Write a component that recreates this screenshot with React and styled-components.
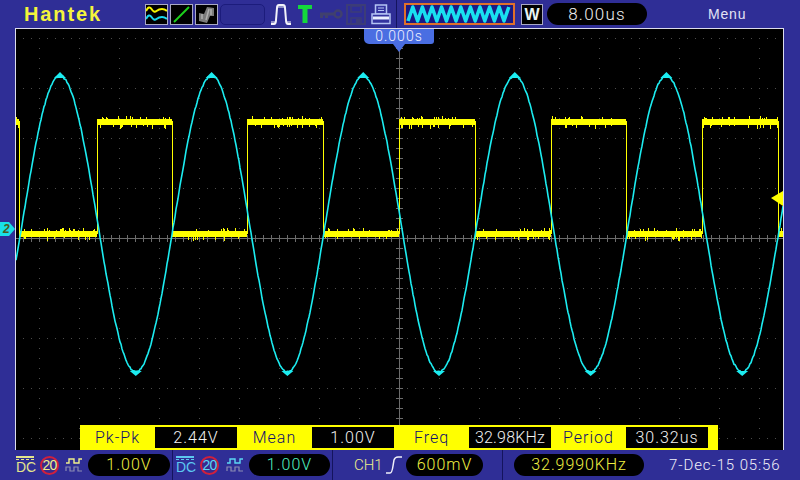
import React, { useMemo } from "react";
import styled, { createGlobalStyle } from "styled-components";

const Global = createGlobalStyle`
  html, body {
    margin: 0;
    padding: 0;
    background: #2f2e96;
    overflow: hidden;
  }
`;

const Page = styled.div`
  width: 800px;
  height: 480px;
  background: #2f2e96;
  display: flex;
  flex-direction: column;
  font-family: "Liberation Sans", Arial, sans-serif;
  position: relative;
  overflow: hidden;
`;

const TopBar = styled.div`
  height: 28px;
  display: flex;
  align-items: center;
  flex-shrink: 0;
`;

const Logo = styled.div`
  width: 121px;
  margin-left: 24px;
  color: #f4f43c;
  font-size: 20px;
  font-weight: bold;
  letter-spacing: 1.9px;
`;

const IconBox = styled.div`
  width: 23px;
  height: 21px;
  box-sizing: border-box;
  margin-right: 2px;
  background: #000;
  border: 1px solid #a9a9c4;
  display: flex;

  svg {
    display: block;
  }
`;

const EmptySlot = styled.div`
  width: 45px;
  height: 21px;
  box-sizing: border-box;
  border: 1px solid #1c1c7c;
  border-radius: 5px;
  background: #2d2d92;
  margin-right: 5px;
`;

const TopIcon = styled.svg`
  display: block;
  flex-shrink: 0;
  margin-right: ${(p) => p.$gap || 0}px;
`;

const VLine = styled.div`
  width: 1px;
  align-self: stretch;
  background: #14145e;
  margin: ${(p) => p.$margin};
`;

const WaveBox = styled.div`
  width: 111px;
  height: 22px;
  box-sizing: border-box;
  background: #1a1a84;
  border: 2px solid #e0702a;
  margin-right: 6px;

  svg {
    display: block;
  }
`;

const ModeBox = styled.div`
  width: 22px;
  height: 21px;
  box-sizing: border-box;
  background: #000;
  border: 1px solid #a9a9c4;
  color: #e8f4f4;
  font-size: 16px;
  font-weight: bold;
  line-height: 19px;
  text-align: center;
  margin-right: 4px;
`;

const Pill = styled.div`
  width: ${(p) => p.$w}px;
  height: 22px;
  margin-left: ${(p) => p.$left || 0}px;
  border-radius: 11px;
  background: #000;
  color: ${(p) => p.$color || "#f0f0f0"};
  font-family: Roboto, "Liberation Sans", sans-serif;
  font-weight: 300;
  font-size: ${(p) => p.$size || 16}px;
  letter-spacing: ${(p) => p.$track ?? 1}px;
  line-height: 22px;
  text-align: center;
  flex-shrink: 0;
`;

const MenuLabel = styled.div`
  margin-left: 61px;
  color: #e4e4f4;
  font-size: 14px;
  letter-spacing: 0.8px;
`;

const Screen = styled.div`
  position: relative;
  margin-left: 15px;
  width: 769px;
  height: 422px;
  box-sizing: border-box;
  border: 1px solid #dcdcec;
  border-bottom: 0;
  background: #000;
  flex-shrink: 0;

  > svg {
    display: block;
  }
`;

const TimeTab = styled.div`
  position: absolute;
  left: 348px;
  top: 0;
  width: 70px;
  height: 15px;
  background: #4a6ee2;
  color: #f0f0ff;
  border-radius: 0 0 3px 5px;
  font-family: Roboto, "Liberation Sans", sans-serif;
  font-weight: 300;
  font-size: 14px;
  letter-spacing: 1px;
  line-height: 15px;
  text-align: center;

  &::after {
    content: "";
    position: absolute;
    left: 29px;
    top: 15px;
    border-left: 6px solid transparent;
    border-right: 6px solid transparent;
    border-top: 8px solid #4a6ee2;
  }
`;

const MeasureBar = styled.div`
  position: absolute;
  left: 64px;
  bottom: 0;
  width: 638px;
  height: 25px;
  background: #ffff00;
  display: flex;
  align-items: center;
`;

const MeasureLabel = styled.div`
  width: 75px;
  text-align: center;
  color: #10106c;
  font-family: Roboto, "Liberation Sans", sans-serif;
  font-weight: 300;
  font-size: 16px;
  letter-spacing: 1px;
  flex-shrink: 0;
`;

const MeasureValue = styled.div`
  width: 82px;
  height: 21px;
  background: #000;
  color: #f2f2f2;
  font-family: Roboto, "Liberation Sans", sans-serif;
  font-weight: 300;
  font-size: 16px;
  letter-spacing: ${(p) => p.$track ?? 1}px;
  line-height: 21px;
  text-align: center;
  flex-shrink: 0;
`;

const ChannelMarker = styled.svg`
  position: absolute;
  left: 0;
  top: 221px;
`;

const BottomBar = styled.div`
  flex: 1;
  display: flex;
  align-items: center;
`;

const DcStack = styled.div`
  width: 18px;
  margin-left: ${(p) => p.$left}px;
  color: ${(p) => p.$color};
  font-size: 14px;
  line-height: 13px;
  text-align: center;
  flex-shrink: 0;

  &::before {
    content: "";
    display: block;
    height: 1px;
    border-top: 2px solid ${(p) => p.$color};
    border-bottom: 1px dashed ${(p) => p.$color};
    margin-bottom: 1px;
  }
`;

const LimitBadge = styled.div`
  width: 19px;
  height: 19px;
  box-sizing: border-box;
  margin-left: ${(p) => p.$left}px;
  border: 2px solid #d0203c;
  border-radius: 50%;
  background: #3a2a8c;
  color: ${(p) => p.$color};
  font-size: 14px;
  line-height: 15px;
  letter-spacing: -0.8px;
  text-align: center;
  flex-shrink: 0;
`;

const PulseSlot = styled.div`
  display: flex;
  width: 18px;
  margin-left: ${(p) => p.$left}px;
  flex-shrink: 0;
`;

const ChannelName = styled.div`
  margin-left: 21px;
  width: 32px;
  color: #f0f08c;
  font-family: Roboto, "Liberation Sans", sans-serif;
  font-weight: 300;
  font-size: 15px;
  flex-shrink: 0;
`;

const DateText = styled.div`
  margin-left: 25px;
  color: #f0f0f8;
  font-family: Roboto, "Liberation Sans", sans-serif;
  font-weight: 300;
  font-size: 15px;
  letter-spacing: 0.9px;
  white-space: nowrap;
`;

// small seeded random, so the noise stays the same on every load
const makeRandom = (seed) => {
  let s = seed;
  return () => {
    s = (s * 16807) % 2147483647;
    return (s - 1) / 2147483646;
  };
};

const X0 = 16;
const Y0 = 29;
const PERIOD = 151.6;

const buildSine = () => {
  const rand = makeRandom(77);
  const pts = [];
  for (let x = 16; x <= 783; x += 1) {
    const y = 224 - 148 * Math.cos(((x - 60) / PERIOD) * Math.PI * 2);
    pts.push(`${x},${(y + (rand() - 0.5) * 1.6).toFixed(1)}`);
  }
  return pts.join(" ");
};

// the trace gets a small blob at each crest and trough
const buildBlobs = () => {
  const out = [];
  for (let i = 0; i < 5; i += 1) {
    const crest = 60 + i * PERIOD;
    const trough = crest + PERIOD / 2;
    out.push(`M${crest - 6} 78L${crest} 72L${crest + 6} 78Z`);
    out.push(`M${trough - 6} 371L${trough} 376L${trough + 6} 371Z`);
  }
  return out.join("");
};

const EDGES = [19, 97, 172, 247, 323, 399, 475, 551, 626, 702, 778];

const buildSquareNoise = () => {
  const rand = makeRandom(1234);
  const bands = [];
  let high = true;
  let left = 16;
  [...EDGES, 783].forEach((edge) => {
    const yc = high ? 122 : 234;
    for (let x = left; x < edge; x += 1) {
      const up = rand() < 0.18 ? 4 + rand() * 2 : 3;
      const down = rand() < 0.18 ? 4 + rand() * 3 : 3;
      bands.push(`M${x + 0.5} ${Math.round(yc - up)}V${Math.round(yc + down)}`);
    }
    left = edge;
    high = !high;
  });
  return bands.join("");
};

const buildEdges = () => EDGES.map((x) => `M${x + 0.5} 121V234`).join("");

const range = (from, to, step) => {
  const out = [];
  for (let v = from; v <= to; v += step) out.push(v);
  return out;
};

const Scope = () => {
  const sine = useMemo(buildSine, []);
  const blobs = useMemo(buildBlobs, []);
  const noise = useMemo(buildSquareNoise, []);
  const edges = useMemo(buildEdges, []);
  const cols = range(39, 759, 40);
  const rows = range(38, 438, 50);
  const hDots = range(23, 775, 8);
  const vDots = range(38, 438, 10);

  return (
    <svg width="767" height="421" viewBox={`${X0} ${Y0} 767 421`}>
      <g fill="#4c4c4c">
        {rows.map((y) =>
          hDots.map((x) => <rect key={`h${y}-${x}`} x={x} y={y} width="1" height="1" />)
        )}
        {cols.map((x) =>
          vDots.map((y) => <rect key={`v${x}-${y}`} x={x} y={y} width="1" height="1" />)
        )}
      </g>
      <path d="M16 238.500H783M399.500 29V449" stroke="#6c6c6c" strokeWidth="1" />
      <path
        d={
          hDots.map((x) => `M${x + 0.5} 235V242`).join("") +
          vDots.map((y) => `M396 ${y + 0.5}H403`).join("")
        }
        stroke="#6c6c6c"
        strokeWidth="1"
      />
      <path d={edges} stroke="#ffff00" strokeWidth="1" fill="none" shapeRendering="crispEdges" />
      <path d={noise} stroke="#ffff00" strokeWidth="1" fill="none" shapeRendering="crispEdges" />
      <polyline points={sine} fill="none" stroke="#1cecf0" strokeWidth="1.600" />
      <path d={blobs} fill="#1cecf0" />
      <path d="M771 198L783 191V206Z" fill="#ffff00" />
    </svg>
  );
};

const PulseIcon = ({ color, dim }) => (
  <svg width="18" height="14" viewBox="0 0 18 14">
    <path d="M1 5H4V1H9V5H14V1H17" stroke={color} strokeWidth="1.400" fill="none" />
    <path d="M1 13V9H5V13H9V9H13V13H17" stroke={dim} strokeWidth="1.200" fill="none" />
  </svg>
);

export default function App() {
  return (
    <Page>
      <Global />
      <TopBar>
        <Logo>Hantek</Logo>
        <IconBox>
          <svg width="21" height="19" viewBox="0 0 21 19">
            <path d="M0 6Q3 0 5.500 4T10.500 6T16 4T21 6" stroke="#f4f400" strokeWidth="2" fill="none" />
            <path d="M0 14Q3 8 5.500 12T10.500 14T16 12T21 14" stroke="#19d8f0" strokeWidth="2" fill="none" />
          </svg>
        </IconBox>
        <IconBox>
          <svg width="21" height="19" viewBox="0 0 21 19">
            <path d="M3 17L18 2" stroke="#1cd01c" strokeWidth="2" />
          </svg>
        </IconBox>
        <IconBox>
          <svg width="21" height="19" viewBox="0 0 21 19">
            <path d="M3 16V8L8 9L11 2L18 3V11L14 11L11 18Z" fill="#7c7c7c" />
            <path d="M6 14V9M10 15L13 4M15 10V4" stroke="#b0b0b0" strokeWidth="1.500" />
          </svg>
        </IconBox>
        <EmptySlot />
        <TopIcon width="22" height="23" viewBox="0 0 22 23" $gap={6}>
          <path
            d="M1 21H4Q6 21 6 17L7 5Q7 2 9 2H13Q15 2 15 5L16 17Q16 21 18 21H21"
            stroke="#f2f2fa"
            strokeWidth="2"
            fill="none"
          />
          <path
            d="M2 21V18M4 21V18M8 2V5M10 2V5M12 2V5M14 2V5M18 21V18M20 21V18"
            stroke="#f2f2fa"
            strokeWidth="1"
          />
        </TopIcon>
        <TopIcon width="14" height="18" viewBox="0 0 14 18" $gap={8}>
          <path d="M0 0H14V4H9.500V18H4.500V4H0Z" fill="#14d83c" />
        </TopIcon>
        <TopIcon width="23" height="10" viewBox="0 0 23 10" $gap={3}>
          <circle cx="18" cy="5" r="3.500" fill="none" stroke="#40406e" strokeWidth="2.500" />
          <path d="M0 3.500H15V6.500H8V9H5V6.500H3V9H0Z" fill="#40406e" />
        </TopIcon>
        <TopIcon width="20" height="21" viewBox="0 0 20 21" $gap={5}>
          <path d="M1 1H19V20H1Z" fill="none" stroke="#3c3c78" strokeWidth="2" />
          <path d="M5 2H15V8H5ZM5 14H15V20H5Z" fill="none" stroke="#3c3c78" strokeWidth="1.500" />
          <rect x="10" y="15" width="4" height="4" fill="#3c3c78" />
        </TopIcon>
        <TopIcon width="20" height="21" viewBox="0 0 20 21">
          <path d="M4.500 1H15.500V10H4.500Z" fill="#3434a0" stroke="#b4c4f4" strokeWidth="1.500" />
          <path d="M7 4H13M7 6.500H13" stroke="#b4c4f4" strokeWidth="1" />
          <path d="M1 10H19V19.500H1Z" fill="#3434a0" stroke="#b4c4f4" strokeWidth="1.500" />
          <rect x="2" y="12.500" width="16" height="3" fill="#e8eeff" />
        </TopIcon>
        <VLine $margin="0 7px 0 5px" />
        <WaveBox>
          <svg width="107" height="18" viewBox="0 0 107 18">
            <path
              d={range(0, 10, 1)
                .map((i) => `${i === 0 ? "M" : "L"}${2 + i * 9.600} 16L${6.800 + i * 9.600} 2`)
                .join("")}
              stroke="#19e0f0"
              strokeWidth="3.500"
              strokeLinejoin="round"
              fill="none"
            />
          </svg>
        </WaveBox>
        <ModeBox>W</ModeBox>
        <Pill $w={100} $size={17} $track={1.2}>8.00us</Pill>
        <MenuLabel>Menu</MenuLabel>
      </TopBar>
      <Screen>
        <Scope />
        <TimeTab>0.000s</TimeTab>
        <MeasureBar>
          <MeasureLabel>Pk-Pk</MeasureLabel>
          <MeasureValue>2.44V</MeasureValue>
          <MeasureLabel>Mean</MeasureLabel>
          <MeasureValue>1.00V</MeasureValue>
          <MeasureLabel>Freq</MeasureLabel>
          <MeasureValue $track={0.2}>32.98KHz</MeasureValue>
          <MeasureLabel>Period</MeasureLabel>
          <MeasureValue>30.32us</MeasureValue>
        </MeasureBar>
      </Screen>
      <ChannelMarker width="15" height="16" viewBox="0 0 15 16">
        <path d="M0 1H9L15 8L9 15H0Z" fill="#19e0e8" />
        <text x="3" y="12" fontSize="12" fontWeight="bold" fontStyle="italic" fontFamily="Liberation Sans" fill="#4a5a20">2</text>
      </ChannelMarker>
      <BottomBar>
        <DcStack $left={16} $color="#e4e48c">DC</DcStack>
        <LimitBadge $left={6} $color="#f0f08c">20</LimitBadge>
        <PulseSlot $left={6}>
          <PulseIcon color="#f0f08c" dim="#8c8cb4" />
        </PulseSlot>
        <Pill $w={82} $left={5} $color="#f0f040">1.00V</Pill>
        <VLine $margin="0 3px 0 2px" />
        <DcStack $left={0} $color="#5cc8f0">DC</DcStack>
        <LimitBadge $left={6} $color="#5cd8f4">20</LimitBadge>
        <PulseSlot $left={7}>
          <PulseIcon color="#5cd8f4" dim="#8c8cb4" />
        </PulseSlot>
        <Pill $w={81} $left={5} $color="#50f0c0">1.00V</Pill>
        <VLine $margin="0 0 0 2px" />
        <ChannelName>CH1</ChannelName>
        <TopIcon width="16" height="18" viewBox="0 0 16 18">
          <path d="M0 17H4Q6 17 7 10L8 4Q9 1 12 1H16" stroke="#f0f0fa" strokeWidth="1.500" fill="none" />
        </TopIcon>
        <Pill $w={77} $left={4} $color="#f0f040">600mV</Pill>
        <VLine $margin="0 11px 0 19px" />
        <Pill $w={130} $color="#f0f040" $track={0.9}>32.9990KHz</Pill>
        <DateText>7-Dec-15 05:56</DateText>
      </BottomBar>
    </Page>
  );
}
